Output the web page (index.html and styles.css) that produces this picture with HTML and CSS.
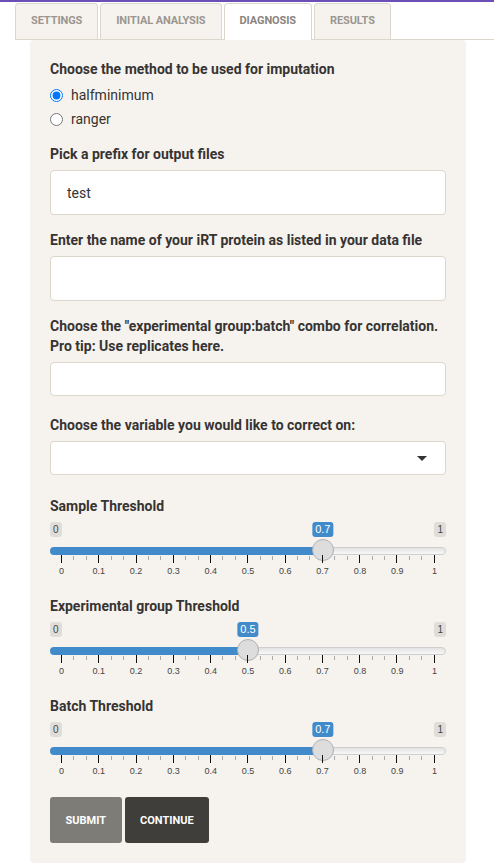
FILE: index.html
```html
<!DOCTYPE html>
<html>
<head>
<meta charset="utf-8">
<link rel="stylesheet" href="styles.css">
</head>
<body>
<div class="topbar"></div>
<ul class="tabs">
  <li class="tab">Settings</li>
  <li class="tab">Initial Analysis</li>
  <li class="tab active">Diagnosis</li>
  <li class="tab">Results</li>
</ul>
<div class="well">
  <div class="group g-radio">
    <label class="lbl">Choose the method to be used for imputation</label>
    <label class="radio"><input type="radio" name="method" checked><span>halfminimum</span></label>
    <label class="radio"><input type="radio" name="method"><span>ranger</span></label>
  </div>
  <div class="group">
    <label class="lbl">Pick a prefix for output files</label>
    <input class="txt tall" type="text" value="test">
  </div>
  <div class="group">
    <label class="lbl">Enter the name of your iRT protein as listed in your data file</label>
    <input class="txt tall" type="text">
  </div>
  <div class="group g-short">
    <label class="lbl">Choose the "experimental group:batch" combo for correlation.<br>Pro tip: Use replicates here.</label>
    <input class="txt" type="text">
  </div>
  <div class="group g-select">
    <label class="lbl">Choose the variable you would like to correct on:</label>
    <div class="select"><span class="caret"></span></div>
  </div>

  <div class="group g-slider">
    <label class="lbl">Sample Threshold</label>
    <div class="irs" style="--v:0.7">
      <span class="irs-min">0</span><span class="irs-max">1</span>
      <span class="irs-line"></span><span class="irs-bar"></span>
      <span class="irs-single">0.7</span><span class="irs-handle"></span>
      <div class="irs-grid">
        <div class="ticks">
          <i class="big"></i><i></i><i></i><i class="big"></i><i></i><i></i><i class="big"></i><i></i><i></i><i class="big"></i><i></i><i></i><i class="big"></i><i></i><i></i><i class="big"></i><i></i><i></i><i class="big"></i><i></i><i></i><i class="big"></i><i></i><i></i><i class="big"></i><i></i><i></i><i class="big"></i><i></i><i></i><i class="big"></i>
        </div>
        <div class="nums"><b>0</b><b>0.1</b><b>0.2</b><b>0.3</b><b>0.4</b><b>0.5</b><b>0.6</b><b>0.7</b><b>0.8</b><b>0.9</b><b>1</b></div>
      </div>
    </div>
  </div>

  <div class="group g-slider">
    <label class="lbl">Experimental group Threshold</label>
    <div class="irs" style="--v:0.5">
      <span class="irs-min">0</span><span class="irs-max">1</span>
      <span class="irs-line"></span><span class="irs-bar"></span>
      <span class="irs-single">0.5</span><span class="irs-handle"></span>
      <div class="irs-grid">
        <div class="ticks">
          <i class="big"></i><i></i><i></i><i class="big"></i><i></i><i></i><i class="big"></i><i></i><i></i><i class="big"></i><i></i><i></i><i class="big"></i><i></i><i></i><i class="big"></i><i></i><i></i><i class="big"></i><i></i><i></i><i class="big"></i><i></i><i></i><i class="big"></i><i></i><i></i><i class="big"></i><i></i><i></i><i class="big"></i>
        </div>
        <div class="nums"><b>0</b><b>0.1</b><b>0.2</b><b>0.3</b><b>0.4</b><b>0.5</b><b>0.6</b><b>0.7</b><b>0.8</b><b>0.9</b><b>1</b></div>
      </div>
    </div>
  </div>

  <div class="group g-slider last">
    <label class="lbl">Batch Threshold</label>
    <div class="irs" style="--v:0.7">
      <span class="irs-min">0</span><span class="irs-max">1</span>
      <span class="irs-line"></span><span class="irs-bar"></span>
      <span class="irs-single">0.7</span><span class="irs-handle"></span>
      <div class="irs-grid">
        <div class="ticks">
          <i class="big"></i><i></i><i></i><i class="big"></i><i></i><i></i><i class="big"></i><i></i><i></i><i class="big"></i><i></i><i></i><i class="big"></i><i></i><i></i><i class="big"></i><i></i><i></i><i class="big"></i><i></i><i></i><i class="big"></i><i></i><i></i><i class="big"></i><i></i><i></i><i class="big"></i><i></i><i></i><i class="big"></i>
        </div>
        <div class="nums"><b>0</b><b>0.1</b><b>0.2</b><b>0.3</b><b>0.4</b><b>0.5</b><b>0.6</b><b>0.7</b><b>0.8</b><b>0.9</b><b>1</b></div>
      </div>
    </div>
  </div>

  <div class="buttons">
    <button class="btn btn-submit">Submit</button>
    <button class="btn btn-continue">Continue</button>
  </div>
</div>
</body>
</html>
```

FILE: styles.css
```css
* { box-sizing: border-box; }
html, body { margin: 0; padding: 0; background: #fff; }
body {
  font-family: Roboto, "Liberation Sans", sans-serif;
  font-size: 14px;
  line-height: 20px;
  color: #333;
  width: 494px;
}
.topbar { height: 2px; background: #6b4eb6; margin-bottom: 1px; }

.tabs {
  list-style: none;
  margin: 0 0 0 15px;
  padding: 0;
  display: flex;
  gap: 2px;
  border-bottom: 1px solid #ddd6cd;
  height: 37px;
}
.tab {
  height: 36px;
  padding: 0 15px;
  border: 1px solid #ddd6cd;
  border-bottom: none;
  border-radius: 4px 4px 0 0;
  background: #f6f3ef;
  font-size: 11px;
  font-weight: 700;
  letter-spacing: -0.1px;
  line-height: 33px;
  text-transform: uppercase;
  color: #9b968f;
}
.tab.active {
  background: #fff;
  height: 37px;
  color: #8a857f;
}

.well {
  margin-left: 30px;
  width: 436px;
  background: #f6f3ef;
  border-radius: 4px;
  padding: 19px 20px 20px;
}
.group { margin-bottom: 15px; }
.g-short { margin-bottom: 19px; }
.g-select { margin-bottom: 21px; }
.g-slider { margin-bottom: 14px; }
.g-slider.last { margin-bottom: 15px; }

.lbl {
  display: block;
  font-weight: 700;
  font-size: 14px;
  line-height: 20px;
  color: #363432;
  margin-bottom: 6px;
}
.radio {
  display: flex;
  align-items: center;
  gap: 8px;
  height: 20px;
  color: #363432;
}
.radio + .radio { margin-top: 4px; }
.radio input {
  margin: 0;
  width: 13px;
  height: 13px;
  accent-color: #0075ff;
}

.txt {
  display: block;
  width: 100%;
  height: 34px;
  border: 1px solid #ddd6cb;
  border-radius: 4px;
  background: #fff;
  padding: 0 16px;
  font-family: Roboto, "Liberation Sans", sans-serif;
  font-size: 14px;
  color: #333;
  outline: none;
}
.txt.tall { height: 45px; }

.select {
  height: 34px;
  border: 1px solid #ddd6cb;
  border-radius: 4px;
  background: #fff;
  display: flex;
  align-items: center;
  justify-content: flex-end;
  padding-right: 18px;
}
.caret {
  width: 0;
  height: 0;
  border-left: 5px solid transparent;
  border-right: 5px solid transparent;
  border-top: 5px solid #333;
}

/* range slider */
.irs {
  position: relative;
  height: 60px;
  font-family: "Liberation Sans", Arial, sans-serif;
}
.irs-min, .irs-max {
  position: absolute;
  top: 0;
  font-size: 10px;
  line-height: 13px;
  padding: 1px 3px;
  border-radius: 3px;
  background: rgba(0,0,0,0.09);
  color: #444;
}
.irs-min { left: 0; }
.irs-max { right: 0; }
.irs-line {
  position: absolute;
  top: 25px;
  left: 0;
  right: 0;
  height: 8px;
  border: 1px solid #cfcfcf;
  border-radius: 8px;
  background: linear-gradient(to bottom, #e2e2e2 0%, #f8f8f8 100%);
}
.irs-bar {
  position: absolute;
  top: 25px;
  left: 0;
  height: 8px;
  width: calc(11px + var(--v) * (100% - 22px));
  background: #428bca;
  border-radius: 8px 0 0 8px;
}
.irs-single {
  position: absolute;
  top: 0;
  left: calc(11px + var(--v) * (100% - 22px));
  transform: translateX(-50%);
  font-size: 11px;
  line-height: 13px;
  padding: 1px 3px;
  border-radius: 3px;
  background: #428bca;
  color: #fff;
  white-space: nowrap;
}
.irs-handle {
  position: absolute;
  top: 17px;
  left: calc(var(--v) * (100% - 22px));
  width: 22px;
  height: 22px;
  border-radius: 50%;
  background: #dddddd;
  border: 1px solid #b0b0b0;
}
.irs-grid {
  position: absolute;
  top: 33px;
  left: 11px;
  right: 11px;
}
.ticks {
  display: flex;
  justify-content: space-between;
  align-items: flex-start;
  height: 8px;
}
.ticks i {
  display: block;
  width: 1px;
  height: 4px;
  margin-top: 1px;
  background: #a8a8a8;
}
.ticks i.big {
  height: 8px;
  margin-top: 0;
  background: #111;
}
.nums {
  display: flex;
  justify-content: space-between;
  margin-top: 3px;
}
.nums b {
  width: 1px;
  display: flex;
  justify-content: center;
  white-space: nowrap;
  font-weight: 400;
  font-size: 9px;
  line-height: 10px;
  color: #444;
}

.buttons { display: flex; gap: 3px; }
.btn {
  height: 46px;
  border: none;
  border-radius: 3px;
  padding: 0 15.5px;
  font-family: Roboto, "Liberation Sans", sans-serif;
  font-size: 11px;
  font-weight: 700;
  text-transform: uppercase;
  color: #fff;
}
.btn-submit { background: #7e7c77; }
.btn-continue { background: #3f3e3a; }
```
